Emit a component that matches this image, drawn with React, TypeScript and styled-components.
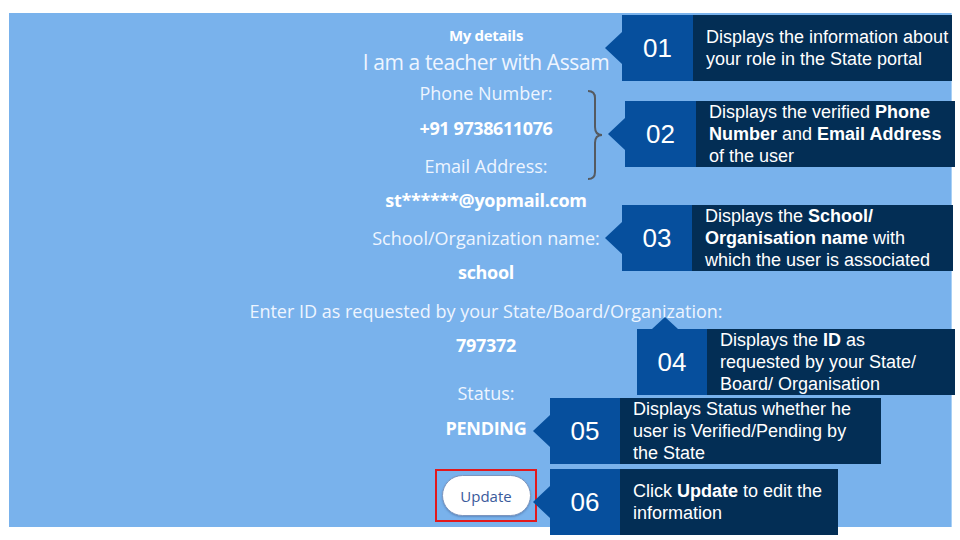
import React from 'react';
import styled, { createGlobalStyle, css } from 'styled-components';

const GlobalStyle = createGlobalStyle`
  html, body {
    margin: 0;
    padding: 0;
    background: #ffffff;
  }
  body {
    width: 960px;
    height: 540px;
    overflow: hidden;
  }
`;

const Slide = styled.div`
  position: relative;
  width: 960px;
  height: 540px;
  padding: 13px 8px 13px 9px;
  box-sizing: border-box;
`;

const Panel = styled.div`
  height: 514px;
  background: #79b2ec;
  border-right: 1px solid #a9d0f5;
  display: flex;
  flex-direction: column;
  align-items: center;
  padding: 10px 0 0 12px;
  box-sizing: border-box;
  font-family: 'Open Sans', 'Noto Sans', sans-serif;
  color: #f4f8ff;
`;

const Line = styled.div<{ $mt: number; $size: number; $bold?: boolean; $ls?: number }>`
  margin-top: ${p => p.$mt}px;
  height: 24px;
  line-height: 24px;
  font-size: ${p => p.$size}px;
  font-weight: ${p => (p.$bold ? 700 : 400)};
  letter-spacing: ${p => p.$ls ?? 0}px;
  color: ${p => (p.$bold ? '#ffffff' : '#eef5ff')};
  white-space: nowrap;
`;

const Highlight = styled.div`
  margin-top: 29px;
  width: 102px;
  height: 53px;
  border: 2px solid #e3191c;
  box-sizing: border-box;
  display: flex;
  align-items: center;
  justify-content: center;
`;

const UpdateButton = styled.button`
  width: 89px;
  height: 41px;
  border-radius: 21px;
  border: 1px solid #7d95bd;
  background: #ffffff;
  box-shadow: 0 1px 2px rgba(40, 70, 120, 0.35);
  color: #3a5a9b;
  font-family: 'Open Sans', 'Noto Sans', sans-serif;
  font-size: 15px;
  cursor: pointer;
`;

const Brace = styled.svg`
  position: absolute;
  left: 584px;
  top: 89px;
`;

type Dir = 'left' | 'up';

const Callout = styled.div<{ $x: number; $y: number }>`
  position: absolute;
  left: ${p => p.$x}px;
  top: ${p => p.$y}px;
  display: flex;
  height: 66px;
  font-family: 'Liberation Sans', Arial, sans-serif;
  color: #ffffff;
`;

const Num = styled.div<{ $w: number; $dir: Dir }>`
  position: relative;
  width: ${p => p.$w}px;
  background: #064f9d;
  display: flex;
  align-items: center;
  justify-content: center;
  font-size: 26px;

  &::before {
    content: '';
    position: absolute;
    ${p =>
      p.$dir === 'left'
        ? css`
            left: -17px;
            top: 17px;
            border-top: 16px solid transparent;
            border-bottom: 16px solid transparent;
            border-right: 17px solid #064f9d;
          `
        : css`
            left: 15px;
            top: -12px;
            border-left: 13px solid transparent;
            border-right: 13px solid transparent;
            border-bottom: 12px solid #064f9d;
          `}
  }
`;

const Note = styled.div<{ $w: number }>`
  width: ${p => p.$w}px;
  background: #032e55;
  display: flex;
  align-items: center;
  padding-left: 13px;
  box-sizing: border-box;
  font-size: 18px;
  line-height: 22px;
  white-space: nowrap;

  b {
    font-weight: 700;
  }
`;

interface Tip {
  n: string;
  x: number;
  y: number;
  num: number;
  note: number;
  dir: Dir;
  text: React.ReactNode;
}

const tips: Tip[] = [
  {
    n: '01', x: 622, y: 15, num: 71, note: 259, dir: 'left',
    text: <>Displays the information about<br />your role in the State portal</>,
  },
  {
    n: '02', x: 625, y: 101, num: 71, note: 259, dir: 'left',
    text: <>Displays the verified <b>Phone</b><br /><b>Number</b> and <b>Email Address</b><br />of the user</>,
  },
  {
    n: '03', x: 622, y: 205, num: 70, note: 261, dir: 'left',
    text: <>Displays the <b>School/</b><br /><b>Organisation name</b> with<br />which the user is associated</>,
  },
  {
    n: '04', x: 637, y: 329, num: 70, note: 248, dir: 'up',
    text: <>Displays the <b>ID</b> as<br />requested by your State/<br />Board/ Organisation</>,
  },
  {
    n: '05', x: 550, y: 398, num: 70, note: 261, dir: 'left',
    text: <>Displays Status whether he<br />user is Verified/Pending by<br />the State</>,
  },
  {
    n: '06', x: 550, y: 469, num: 70, note: 218, dir: 'left',
    text: <>Click <b>Update</b> to edit the<br />information</>,
  },
];

export default function App() {
  return (
    <>
      <GlobalStyle />
      <Slide>
        <Panel>
          <Line $mt={0} $size={15} $bold $ls={-0.3}>My details</Line>
          <Line $mt={3} $size={21} $ls={-0.4}>I am a teacher with Assam</Line>
          <Line $mt={7} $size={18}>Phone Number:</Line>
          <Line $mt={11} $size={18} $bold $ls={-0.4}>+91 9738611076</Line>
          <Line $mt={14} $size={18}>Email Address:</Line>
          <Line $mt={10} $size={18} $bold $ls={-0.3}>st******@yopmail.com</Line>
          <Line $mt={14} $size={18}>School/Organization name:</Line>
          <Line $mt={10} $size={18} $bold $ls={-0.3}>school</Line>
          <Line $mt={15} $size={18}>Enter ID as requested by your State/Board/Organization:</Line>
          <Line $mt={10} $size={18} $bold $ls={-0.3}>797372</Line>
          <Line $mt={24} $size={18}>Status:</Line>
          <Line $mt={11} $size={18} $bold $ls={-0.3}>PENDING</Line>
          <Highlight>
            <UpdateButton>Update</UpdateButton>
          </Highlight>
        </Panel>

        <Brace width="24" height="92" viewBox="0 0 24 92">
          <path
            d="M4 2 Q11 2 11 9 L11 38 Q11 46 18 46 Q11 46 11 54 L11 83 Q11 90 4 90"
            fill="none"
            stroke="#555a60"
            strokeWidth="2"
          />
        </Brace>

        {tips.map(t => (
          <Callout key={t.n} $x={t.x} $y={t.y}>
            <Num $w={t.num} $dir={t.dir}>{t.n}</Num>
            <Note $w={t.note}>
              <div>{t.text}</div>
            </Note>
          </Callout>
        ))}
      </Slide>
    </>
  );
}
